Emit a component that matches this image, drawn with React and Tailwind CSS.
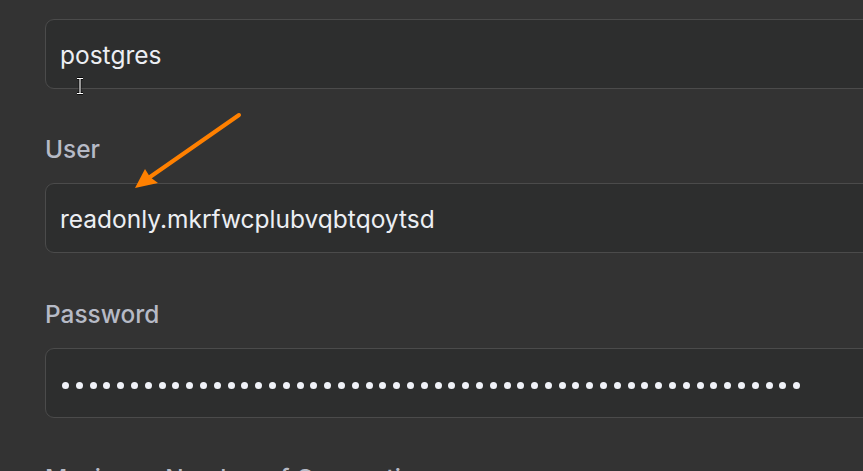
import React from "react";

const dots = Array.from({ length: 54 });

const Label = ({ children }) => (
  <div className="text-[24.4px] leading-[36px] font-medium text-[#b6bac6] mt-[42px] mb-[16px] whitespace-nowrap">
    {children}
  </div>
);

const Field = ({ children }) => (
  <div className="w-[840px] h-[70px] flex items-center px-[14px] pt-[3px] bg-[#2d2e2e] border border-[#4b4b4b] rounded-[9px] text-[24.5px] text-[#eceef3]">
    {children}
  </div>
);

const App = () => {
  return (
    <div
      className="relative w-[863px] h-[471px] overflow-hidden bg-[#333333] pl-[45px] pt-[19px]"
      style={{ fontFamily: "Inter, 'Noto Sans', sans-serif" }}
    >
      <Field>postgres</Field>
      <Label>User</Label>
      <Field>readonly.mkrfwcplubvqbtqoytsd</Field>
      <div className="h-[1px]" />
      <Label>Password</Label>
      <Field>
        <div className="flex items-center gap-[6.8px] pl-[2px] mt-[1px]">
          {dots.map((_, i) => (
            <div key={i} className="w-[7px] h-[7px] rounded-full bg-[#f0f2f8]" />
          ))}
        </div>
      </Field>
      <Label>Maximum Number of Connections</Label>

      {/* text cursor */}
      <svg className="absolute left-[75px] top-[77px]" width="10" height="18" viewBox="0 0 10 18">
        <path d="M2 1.5h6M5 1.5v15M2 16.5h6" stroke="#000" strokeWidth="2.6" fill="none" />
        <path d="M2 1.5h6M5 1.5v15M2 16.5h6" stroke="#fff" strokeWidth="1.2" fill="none" />
      </svg>

      {/* annotation arrow */}
      <svg className="absolute left-0 top-0" width="863" height="471" viewBox="0 0 863 471">
        <line x1="239" y1="115" x2="150" y2="177" stroke="#ff8000" strokeWidth="4" strokeLinecap="round" />
        <path d="M135 188 L145 169 L150 177 L158 183 Z" fill="#ff8000" />
      </svg>
    </div>
  );
};

export default App;
